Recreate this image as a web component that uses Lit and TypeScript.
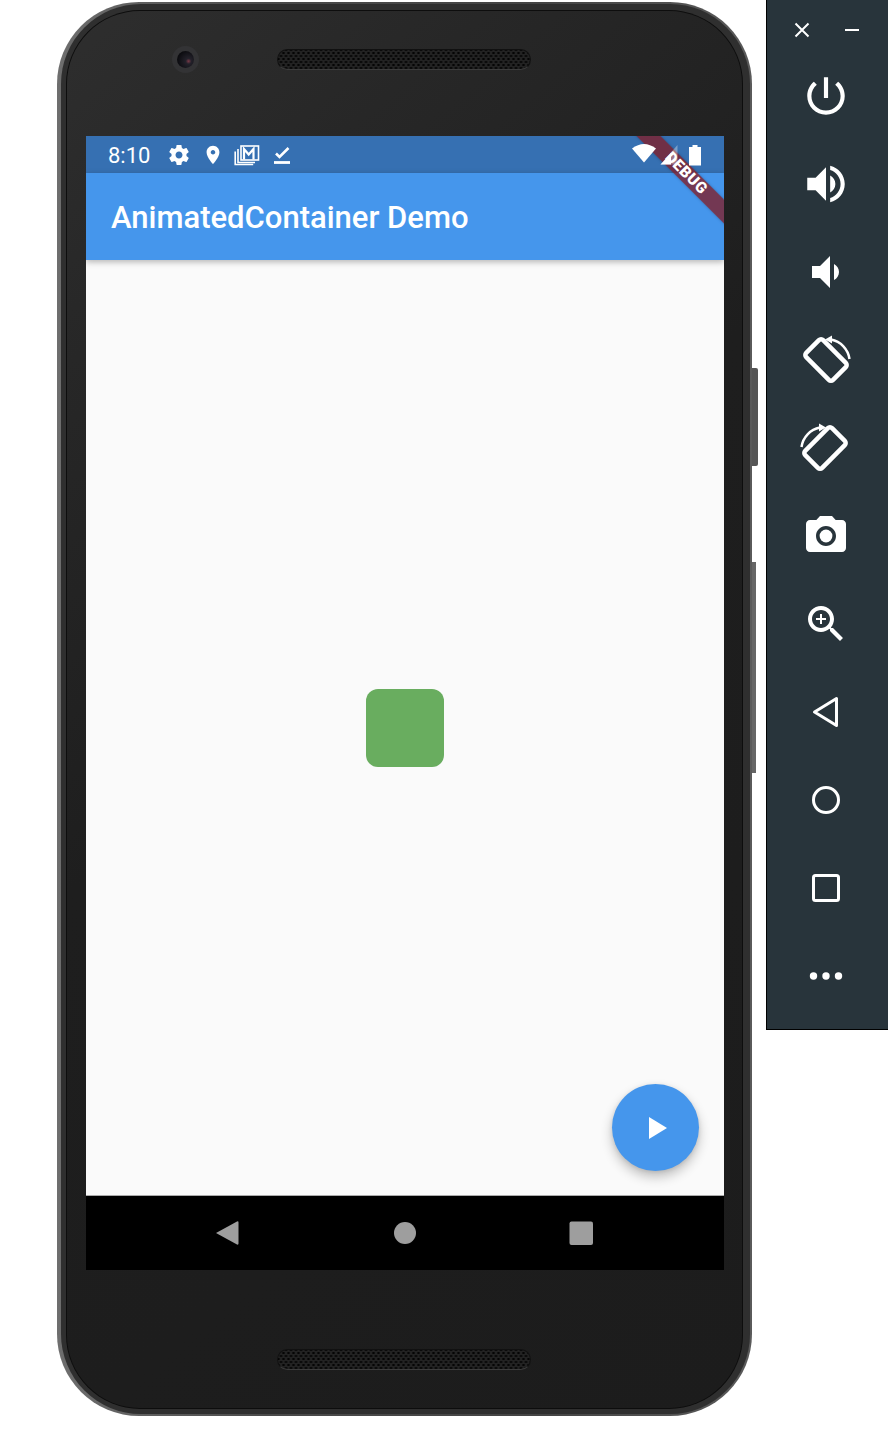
import { LitElement, html, css, svg } from 'lit';
import { customElement } from 'lit/decorators.js';

const WHITE = '#fff';

// material paths, viewBox 24
const GEAR =
  'M19.43 12.98c.04-.32.07-.64.07-.98s-.03-.66-.07-.98l2.11-1.65c.19-.15.24-.42.12-.64l-2-3.46c-.12-.22-.39-.3-.61-.22l-2.49 1c-.52-.4-1.08-.73-1.69-.98l-.38-2.65C14.46 2.18 14.25 2 14 2h-4c-.25 0-.46.18-.49.42l-.38 2.65c-.61.25-1.17.59-1.69.98l-2.49-1c-.23-.09-.49 0-.61.22l-2 3.46c-.13.22-.07.49.12.64l2.11 1.65c-.04.32-.07.65-.07.98s.03.66.07.98l-2.11 1.65c-.19.15-.24.42-.12.64l2 3.46c.12.22.39.3.61.22l2.49-1c.52.4 1.08.73 1.69.98l.38 2.65c.03.24.24.42.49.42h4c.25 0 .46-.18.49-.42l.38-2.65c.61-.25 1.17-.59 1.69-.98l2.49 1c.23.09.49 0 .61-.22l2-3.46c.12-.22.07-.49-.12-.64l-2.11-1.65zM12 15.5c-1.93 0-3.5-1.57-3.5-3.5s1.57-3.5 3.5-3.5 3.5 1.57 3.5 3.5-1.57 3.5-3.5 3.5z';
const PIN =
  'M12 2C8.13 2 5 5.13 5 9c0 5.25 7 13 7 13s7-7.75 7-13c0-3.87-3.13-7-7-7zm0 9.5c-1.38 0-2.5-1.12-2.5-2.5s1.12-2.5 2.5-2.5 2.5 1.12 2.5 2.5-1.12 2.5-2.5 2.5z';
const POWER =
  'M13 3h-2v10h2V3zm4.83 2.17l-1.42 1.42C17.99 7.86 19 9.81 19 12c0 3.87-3.13 7-7 7s-7-3.13-7-7c0-2.19 1.01-4.14 2.58-5.42L6.17 5.17C4.23 6.82 3 9.26 3 12c0 4.97 4.03 9 9 9s9-4.03 9-9c0-2.74-1.23-5.18-3.17-6.83z';
const VOL_UP =
  'M3 9v6h4l5 5V4L7 9H3zm13.5 3c0-1.77-1.02-3.29-2.5-4.03v8.05c1.48-.73 2.5-2.25 2.5-4.02zM14 3.23v2.06c2.89.86 5 3.54 5 6.71s-2.11 5.85-5 6.71v2.06c4.01-.91 7-4.49 7-8.77s-2.99-7.86-7-8.77z';
const VOL_DOWN =
  'M18.5 12c0-1.77-1.02-3.29-2.5-4.03v8.05c1.48-.73 2.5-2.25 2.5-4.02zM5 9v6h4l5 5V4L9 9H5z';
const CAMERA =
  'M9 2L7.17 4H4c-1.1 0-2 .9-2 2v12c0 1.1.9 2 2 2h16c1.1 0 2-.9 2-2V6c0-1.1-.9-2-2-2h-3.17L15 2H9zm3 15c-2.76 0-5-2.24-5-5s2.24-5 5-5 5 2.24 5 5-2.24 5-5 5z';
const ZOOM =
  'M15.5 14h-.79l-.28-.27C15.41 12.59 16 11.11 16 9.5 16 5.91 13.09 3 9.5 3S3 5.91 3 9.5 5.91 16 9.5 16c1.61 0 3.09-.59 4.23-1.57l.27.28v.79l5 4.99L20.49 19l-4.99-5zm-6 0C7.01 14 5 11.99 5 9.5S7.01 5 9.5 5 14 7.01 14 9.5 11.99 14 9.5 14z';
const ZOOM_PLUS = 'M12 10h-2v2H9v-2H7V9h2V7h1v2h2v1z';

const rotateGlyph = svg`
  <rect x="6" y="13" width="38" height="24" rx="3" transform="rotate(45 25 25)" fill="none" stroke=${WHITE} stroke-width="4.5"></rect>
  <path d="M30 4.5A23 23 0 0 1 48.5 24" fill="none" stroke=${WHITE} stroke-width="2.5"></path>
  <path d="M24 4.5l7-4v8z" fill=${WHITE}></path>`;

@customElement('app-root')
export class AppRoot extends LitElement {
  static styles = css`
    :host {
      display: flex;
      align-items: flex-start;
      width: 888px;
      height: 1440px;
      background: #fff;
      font-family: Roboto, 'Liberation Sans', sans-serif;
      overflow: hidden;
    }
    svg {
      display: block;
      flex: none;
    }

    /* phone body, layer by layer from the outer edge in */
    .shell {
      flex: none;
      margin: 2px 0 0 57px;
      width: 695px;
      height: 1414px;
      box-sizing: border-box;
      padding: 2px 2px 2px 4px;
      border-radius: 82px;
      background: linear-gradient(90deg, #6e6e6e 0%, #4a4a4a 30%, #444 70%, #5a5a5a 100%);
    }
    .band {
      height: 100%;
      box-sizing: border-box;
      padding: 6px 7px 5px 5px;
      border-radius: 80px;
      background: #2f2f2f;
    }
    .line {
      height: 100%;
      box-sizing: border-box;
      padding: 1px;
      border-radius: 74px;
      background: #0d0d0d;
    }
    .face {
      height: 100%;
      display: flex;
      flex-direction: column;
      border-radius: 73px;
      background: linear-gradient(140deg, #2e2e2e 0%, #272727 18%, #1e1e1e 45%, #1c1c1c 100%);
    }
    .bezel-top {
      height: 125px;
      box-sizing: border-box;
      padding: 35px 0 0 105px;
      display: flex;
      align-items: flex-start;
      gap: 78px;
    }
    .bezel-bottom {
      flex: 1;
      box-sizing: border-box;
      padding: 76px 0 0 210px;
    }
    .lens {
      width: 27px;
      height: 27px;
      border-radius: 50%;
      background: #333335;
      display: flex;
      align-items: center;
      justify-content: center;
    }
    .lens i {
      display: block;
      width: 17px;
      height: 17px;
      border-radius: 50%;
      background: radial-gradient(circle at 68% 60%, #7a3a48 0, #23212a 18%, #0c0c10 70%);
    }
    .speaker {
      width: 254px;
      height: 21px;
      margin-top: 3px;
      box-sizing: border-box;
      border-radius: 11px;
      border: 1px solid #111;
      border-bottom-color: #3c3c3c;
      background-color: #222;
      background-image:
        radial-gradient(circle, #050505 1px, transparent 1.3px),
        radial-gradient(circle, #050505 1px, transparent 1.3px);
      background-size: 5px 6px;
      background-position: 3px 0, 5.5px 3px;
    }

    /* screen */
    .screen {
      flex: none;
      position: relative;
      overflow: hidden;
      margin: 0 18px 0 19px;
      width: 638px;
      height: 1134px;
      display: flex;
      flex-direction: column;
      background: #fafafa;
    }
    .status {
      flex: none;
      height: 37px;
      box-sizing: border-box;
      padding: 0 22px 0 22px;
      display: flex;
      align-items: center;
      background: #3670b2;
      color: #fff;
    }
    .clock {
      font-size: 22px;
      line-height: 37px;
      margin-top: 1px;
      width: 45px;
    }
    .status .gear {
      width: 24px;
      height: 24px;
      margin: 1px 0 0 14px;
    }
    .status .pin {
      width: 22px;
      height: 22px;
      margin: 1px 0 0 11px;
    }
    .status .mail {
      width: 26px;
      height: 22px;
      margin: 0 0 0 10px;
    }
    .status .check {
      width: 18px;
      height: 20px;
      margin: 0 0 0 13px;
    }
    /* system icons sit above the debug banner */
    .status .right {
      position: relative;
      z-index: 3;
      margin-left: auto;
      display: flex;
      align-items: center;
      gap: 3px;
    }
    .status .wifi {
      width: 26px;
      height: 22px;
      margin-top: -3px;
    }
    .status .signal {
      width: 18px;
      height: 22px;
    }
    .status .battery {
      width: 14px;
      height: 22px;
      margin-left: 7px;
    }
    .appbar {
      flex: none;
      position: relative;
      z-index: 1;
      height: 87px;
      box-sizing: border-box;
      padding: 2px 0 0 25px;
      display: flex;
      align-items: center;
      background: #4596ec;
      box-shadow: 0 2px 6px rgba(0, 0, 0, 0.28);
      color: #fff;
      font-size: 31px;
      font-weight: 500;
    }
    .main {
      flex: 1;
      display: flex;
      align-items: center;
      justify-content: center;
      border-bottom: 1px solid #aaa;
    }
    .box {
      width: 78px;
      height: 78px;
      border-radius: 12px;
      background: #69ad5f;
      margin-top: 1px;
    }
    .fab {
      position: absolute;
      right: 25px;
      bottom: 99px;
      z-index: 1;
      width: 87px;
      height: 87px;
      border-radius: 50%;
      background: #4596ec;
      box-shadow: 0 6px 12px rgba(0, 0, 0, 0.24), 0 1px 4px rgba(0, 0, 0, 0.1);
      display: flex;
      align-items: center;
      justify-content: center;
    }
    .fab svg {
      width: 18px;
      height: 22px;
      margin-left: 5px;
    }
    .nav {
      flex: none;
      height: 74px;
      background: #000;
      display: flex;
      align-items: center;
      gap: 152.5px;
      padding-left: 130px;
    }
    .nav svg {
      width: 24px;
      height: 26px;
    }
    .ribbon {
      position: absolute;
      z-index: 2;
      left: 500px;
      top: 29px;
      width: 200px;
      height: 17px;
      transform: rotate(45deg);
      background: rgba(128, 30, 40, 0.78);
      box-shadow: 0 0 3px rgba(0, 0, 0, 0.25);
      color: #fff;
      font-size: 15.5px;
      font-weight: 900;
      line-height: 17px;
      letter-spacing: 0.5px;
      text-align: center;
    }

    /* side keys between phone and toolbar */
    .keys {
      flex: none;
      width: 14px;
      padding-top: 368px;
    }
    .key-power {
      width: 6px;
      height: 98px;
      background: #555;
      border-radius: 0 2px 2px 0;
    }
    .key-volume {
      width: 4px;
      height: 211px;
      margin-top: 96px;
      background: #666;
    }

    /* emulator toolbar */
    .toolbar {
      flex: none;
      width: 122px;
      height: 1030px;
      box-sizing: border-box;
      border-left: 1px solid #000;
      border-bottom: 1px solid #000;
      padding-right: 3px;
      background: #28343b;
    }
    .window {
      height: 52px;
      box-sizing: border-box;
      padding: 22px 0 0 27px;
      display: flex;
      gap: 34px;
    }
    .window svg {
      width: 16px;
      height: 16px;
    }
    .tool {
      height: 88px;
      display: flex;
      align-items: center;
      justify-content: center;
    }
    .tool svg {
      width: 48px;
      height: 48px;
    }
    .tool svg.wide,
    .tool svg.rot {
      width: 50px;
      height: 50px;
    }
    .tool svg.flip {
      transform: scaleX(-1);
      margin-left: -2px;
    }
  `;

  private materialTool(d: string, extra = svg``, cls = '') {
    return html`<div class="tool">
      <svg class=${cls} viewBox="0 0 24 24" fill=${WHITE}><path d=${d}></path>${extra}</svg>
    </div>`;
  }

  private statusBar() {
    return html`<div class="status">
      <span class="clock">8:10</span>
      <svg class="gear" viewBox="0 0 24 24" fill=${WHITE}><path d=${GEAR}></path></svg>
      <svg class="pin" viewBox="0 0 24 24" fill=${WHITE}><path d=${PIN}></path></svg>
      <svg class="mail" viewBox="0 0 26 22" fill="none" stroke=${WHITE}>
        <rect x="7" y="2" width="17.5" height="14" stroke-width="1.6"></rect>
        <path d="M10 15.5V5l4.7 5.5L19.5 5v10.5" stroke-width="2.2"></path>
        <path d="M4 5v13.5h17" stroke-width="1.6"></path>
        <path d="M1.2 7.5v13h18" stroke-width="1.6"></path>
      </svg>
      <svg class="check" viewBox="0 0 18 20" fill="none" stroke=${WHITE}>
        <path d="M3 8.5l3.5 3.5L15.5 3" stroke-width="2.6"></path>
        <path d="M1 17.5h16" stroke-width="2.8"></path>
      </svg>
      <div class="right">
        <svg class="wifi" viewBox="0 0 26 22" fill=${WHITE}>
          <path d="M13 20.5L1 6.5Q13 -2.5 25 6.5Z"></path>
        </svg>
        <svg class="signal" viewBox="0 0 18 22">
          <path d="M0.5 20.5L17.5 1v19.5Z" fill=${WHITE} fill-opacity="0.35"></path>
          <path d="M0.5 20.5L11 9v11.5Z" fill=${WHITE}></path>
        </svg>
        <svg class="battery" viewBox="0 0 14 22" fill=${WHITE}>
          <path d="M4.5 1h5v2H13v18.5H1V3h3.5Z"></path>
        </svg>
      </div>
    </div>`;
  }

  private navBar() {
    return html`<div class="nav">
      <svg viewBox="0 0 24 26" fill="#9e9e9e"><path d="M0 13L21 1.5q1.5 -.6 1.5 1v21q0 1.6-1.5 1Z"></path></svg>
      <svg viewBox="0 0 24 26" fill="#9e9e9e"><circle cx="12" cy="13" r="11"></circle></svg>
      <svg viewBox="0 0 24 26" fill="#9e9e9e"><rect x="0.5" y="1.5" width="23.5" height="23.5" rx="2"></rect></svg>
    </div>`;
  }

  private toolbar() {
    return html`<div class="toolbar">
      <div class="window">
        <svg viewBox="0 0 16 16" fill="none" stroke=${WHITE} stroke-width="2">
          <path d="M1.5 1.5l13 13M14.5 1.5l-13 13"></path>
        </svg>
        <svg viewBox="0 0 16 16" fill="none" stroke=${WHITE} stroke-width="2">
          <path d="M1 8h14"></path>
        </svg>
      </div>
      ${this.materialTool(POWER, svg``, 'wide')}
      ${this.materialTool(VOL_UP, svg``, 'wide')}
      ${this.materialTool(VOL_DOWN)}
      <div class="tool"><svg class="rot" viewBox="0 0 50 50">${rotateGlyph}</svg></div>
      <div class="tool"><svg class="rot flip" viewBox="0 0 50 50">${rotateGlyph}</svg></div>
      ${this.materialTool(CAMERA, svg`<circle cx="12" cy="12" r="3.2"></circle>`)}
      ${this.materialTool(ZOOM, svg`<path d=${ZOOM_PLUS}></path>`)}
      <div class="tool">
        <svg viewBox="0 0 48 48" fill="none" stroke=${WHITE} stroke-width="3" stroke-linejoin="round">
          <path d="M12.5 24L34.5 10.5V37.5Z"></path>
        </svg>
      </div>
      <div class="tool">
        <svg viewBox="0 0 48 48" fill="none" stroke=${WHITE} stroke-width="3"><circle cx="24" cy="24" r="12.5"></circle></svg>
      </div>
      <div class="tool">
        <svg viewBox="0 0 48 48" fill="none" stroke=${WHITE} stroke-width="3">
          <rect x="11.5" y="11.5" width="25" height="25" rx="2"></rect>
        </svg>
      </div>
      <div class="tool">
        <svg viewBox="0 0 48 48" fill=${WHITE}>
          <circle cx="11.5" cy="24" r="3.7"></circle>
          <circle cx="24" cy="24" r="3.7"></circle>
          <circle cx="36.5" cy="24" r="3.7"></circle>
        </svg>
      </div>
    </div>`;
  }

  render() {
    return html`
      <div class="shell">
        <div class="band">
          <div class="line">
            <div class="face">
              <div class="bezel-top">
                <div class="lens"><i></i></div>
                <div class="speaker"></div>
              </div>
              <div class="screen">
                ${this.statusBar()}
                <div class="appbar">AnimatedContainer Demo</div>
                <div class="main"><div class="box"></div></div>
                ${this.navBar()}
                <div class="fab">
                  <svg viewBox="0 0 18 22" fill=${WHITE}><path d="M0 0L18 11 0 22Z"></path></svg>
                </div>
                <div class="ribbon">DEBUG</div>
              </div>
              <div class="bezel-bottom"><div class="speaker"></div></div>
            </div>
          </div>
        </div>
      </div>
      <div class="keys">
        <div class="key-power"></div>
        <div class="key-volume"></div>
      </div>
      ${this.toolbar()}
    `;
  }
}
